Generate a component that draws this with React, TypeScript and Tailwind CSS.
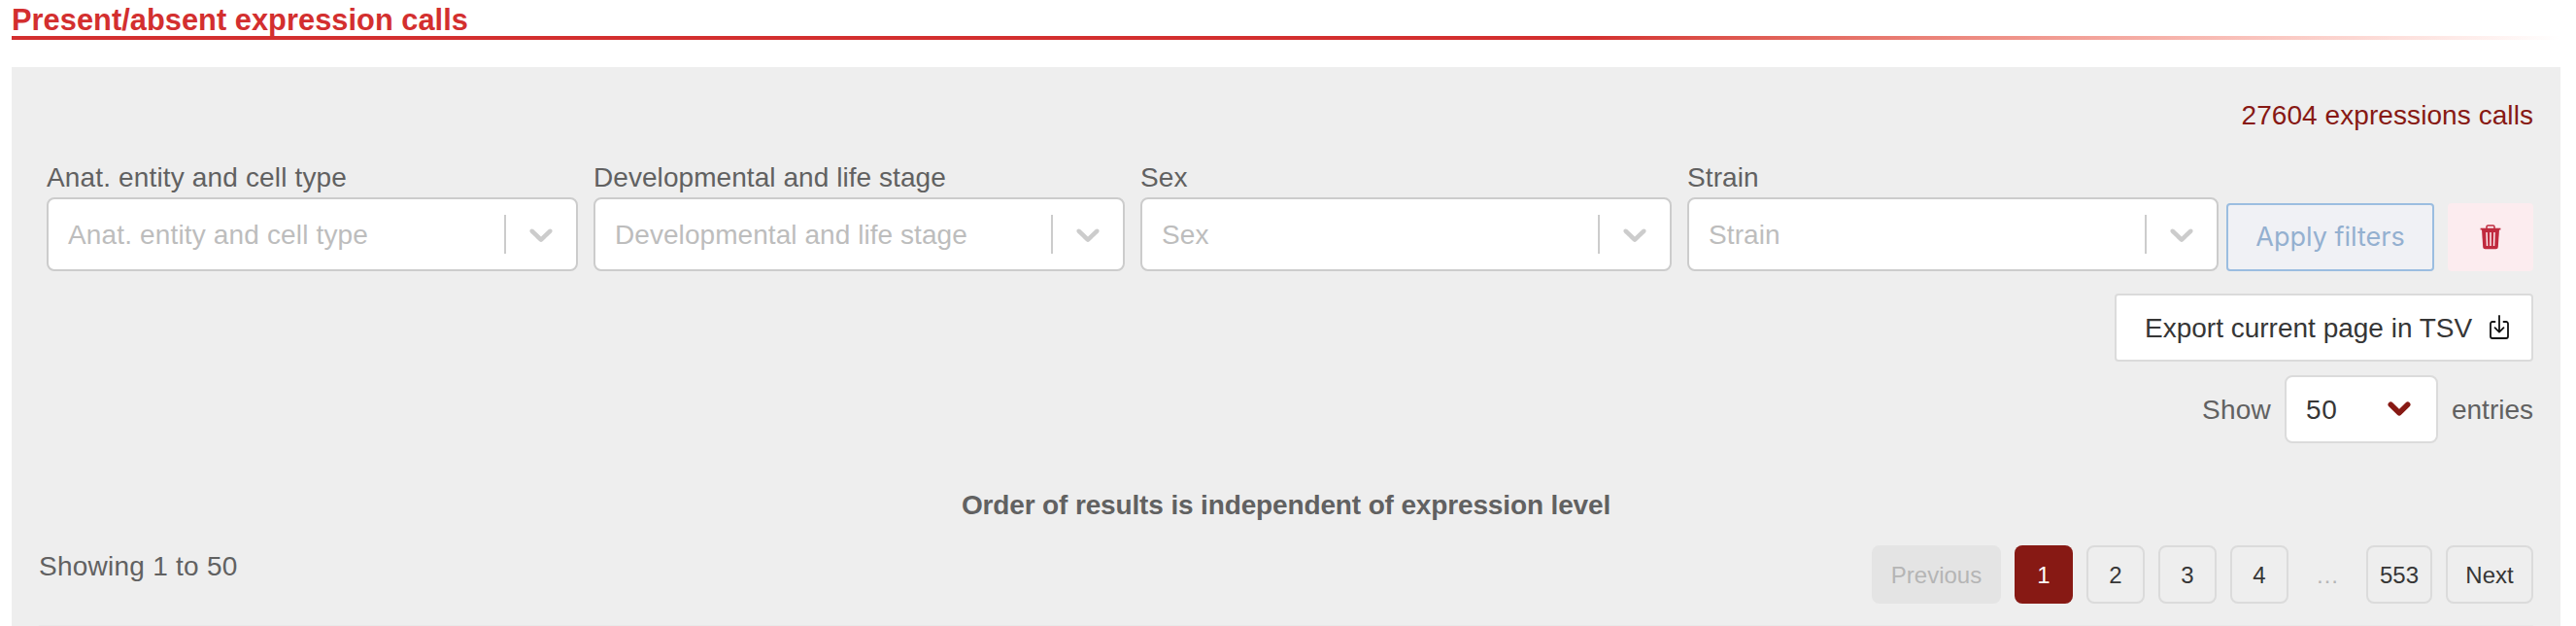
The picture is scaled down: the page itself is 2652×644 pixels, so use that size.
const filters = [
  { label: "Anat. entity and cell type", cls: "tracking-[0.15px]" },
  { label: "Developmental and life stage", cls: "tracking-[0.06px]" },
  { label: "Sex", cls: "tracking-[0.1px]" },
  { label: "Strain", cls: "tracking-[0.1px]" },
];

function Filter({ label, cls }: { label: string; cls: string }) {
  return (
    <div className="w-[547px] shrink-0">
      <div className={`h-[42px] pt-px leading-[42px] text-[28px] whitespace-nowrap text-[#616161] ${cls}`}>{label}</div>
      <div className="flex h-[76px] items-center rounded-[8px] border-2 border-[#cccccc] bg-white">
        <div className={`flex-1 pt-0.5 pl-5 text-[28px] leading-9 whitespace-nowrap text-[#bdbdbd] ${cls}`}>{label}</div>
        <div className="h-10 w-[2px] bg-[#cccccc]" />
        <div className="flex w-[72px] justify-center">
          <svg className="size-10 fill-[#cccccc]" viewBox="0 0 20 20">
            <path d="M4.516 7.548c0.436-0.446 1.043-0.481 1.576 0l3.908 3.747 3.908-3.747c0.533-0.481 1.141-0.446 1.574 0 0.436 0.445 0.408 1.197 0 1.615-0.406 0.418-4.695 4.502-4.695 4.502-0.217 0.223-0.502 0.335-0.787 0.335s-0.57-0.112-0.789-0.335c0 0-4.287-4.084-4.695-4.502s-0.436-1.17 0-1.615z" />
          </svg>
        </div>
      </div>
    </div>
  );
}

function TrashIcon() {
  return (
    <svg className="h-[26px] w-[22px]" viewBox="0 0 22 26" fill="none">
      <path d="M7 4V2.2C7 1.4 7.6 .9 8.4 .9h5.2c.8 0 1.4 .5 1.4 1.3V4" stroke="#c02a3e" strokeWidth="1.5" />
      <path d="M.6 3.7h20.8v1.8H.6z" fill="#c02a3e" />
      <path d="M2 5h18l-1.2 18.1c-.1 1.4-1 2.2-2.3 2.2h-11c-1.3 0-2.2-.8-2.3-2.2z" fill="#c02a3e" />
      <path d="M7 8l.5 14M11 8v14M15 8l-.5 14" stroke="#fdecef" strokeWidth="1.5" />
    </svg>
  );
}

function ExportIcon() {
  return (
    <svg className="h-[26px] w-[20px]" viewBox="0 0 20 26" fill="none" stroke="#111" strokeWidth="1.8" strokeLinecap="round" strokeLinejoin="round">
      <path d="M5.5 7H3C1.8 7 1 7.8 1 9v13c0 1.2 .8 2 2 2h14c1.2 0 2-.8 2-2V9c0-1.2-.8-2-2-2h-2.5" />
      <path d="M10 1v16.5M5.5 13.2l4.5 4.5 4.5-4.5" />
    </svg>
  );
}

const pageBox = "flex h-[60px] items-center justify-center rounded-[8px] border-2 border-[#dbdbdb] pt-0.5 text-[24px] text-[#363636]";

export default function App() {
  return (
    <div className="flex h-[644px] w-[2652px] flex-col overflow-hidden bg-white pr-4 pl-3 font-['Liberation_Sans',Arial,sans-serif]">
      <h2 className="h-[37px] pt-px text-[30.8px] leading-10 font-bold tracking-[0.03px] whitespace-nowrap text-[#d32f2f]">Present/absent expression calls</h2>
      <div className="h-1 bg-linear-to-r from-[#d32f2f] from-62% to-white" />
      <main className="mt-7 flex flex-1 flex-col bg-[#eeeeee] pr-7">
        <div className="mt-7 h-[42px] pt-px text-right text-[28px] leading-[42px] tracking-[0.07px] text-[#871914]">27604 expressions calls</div>
        <div className="mt-[22px] flex items-end pl-9">
          <div className="flex gap-4">
            {filters.map((f) => (
              <Filter key={f.label} label={f.label} cls={f.cls} />
            ))}
          </div>
          <button className="ml-2 h-[70px] w-[214px] rounded-[4px] border-2 border-[#9bbde0] bg-[#f0f1f5] font-['Inter',sans-serif] text-[27px] text-[#94b0d0]">Apply filters</button>
          <button className="ml-[14px] flex h-[70px] w-[88px] items-center justify-center rounded-[4px] bg-[#fcecef]">
            <TrashIcon />
          </button>
        </div>
        <div className="mt-[23px] flex justify-end">
          <button className="flex h-[70px] w-[431px] items-center rounded-[4px] border-2 border-[#dbdbdb] bg-white pl-[29px] text-[28px] text-[#363636]">
            <span className="w-[355px] pt-0.5 text-left whitespace-nowrap">Export current page in TSV</span>
            <ExportIcon />
          </button>
        </div>
        <div className="mt-[14px] flex h-[70px] items-center justify-end text-[28px] text-[#616161]">
          <span className="pt-0.5 tracking-[0.2px]">Show</span>
          <div className="mx-[14px] flex h-[70px] w-[158px] items-center justify-between rounded-[8px] border-2 border-[#dbdbdb] bg-white pr-[26px] pl-5 text-[#363636]">
            <span className="pt-0.5 tracking-[0.8px]">50</span>
            <svg className="h-4 w-6" viewBox="0 0 24 16" fill="none">
              <path d="M3.300 3.300l8.700 8.500 8.700-8.500" stroke="#871914" strokeWidth="5.600" strokeLinejoin="round" strokeLinecap="round" />
            </svg>
          </div>
          <span className="pt-0.5">entries</span>
        </div>
        <div className="mt-[42px] h-[42px] pt-px pl-[28px] text-center text-[28px] leading-[42px] font-bold tracking-[-0.14px] text-[#616161]">Order of results is independent of expression level</div>
        <div className="mt-[21px] flex justify-between pl-7">
          <div className="h-[42px] pt-px text-[28px] leading-[42px] tracking-[0.25px] text-[#616161]">Showing 1 to 50</div>
          <nav className="flex gap-[14px]">
            <div className="flex h-[60px] w-[133px] items-center justify-center rounded-[8px] bg-[#e4e4e4] pt-0.5 text-[24px] text-[#b5b5b5]">Previous</div>
            <div className="flex h-[60px] w-[60px] items-center justify-center rounded-[8px] bg-[#871914] pt-0.5 text-[24px] text-white">1</div>
            <div className={`${pageBox} w-[60px]`}>2</div>
            <div className={`${pageBox} w-[60px]`}>3</div>
            <div className={`${pageBox} w-[60px]`}>4</div>
            <div className="flex h-[60px] w-[52px] items-center justify-center pt-0.5 text-[24px] text-[#b5b5b5]">…</div>
            <div className={`${pageBox} w-[68px]`}>553</div>
            <div className={`${pageBox} w-[90px]`}>Next</div>
          </nav>
        </div>
        <div className="mt-[22px] ml-7 h-px bg-[#e9e9e9]" />
      </main>
    </div>
  );
}
